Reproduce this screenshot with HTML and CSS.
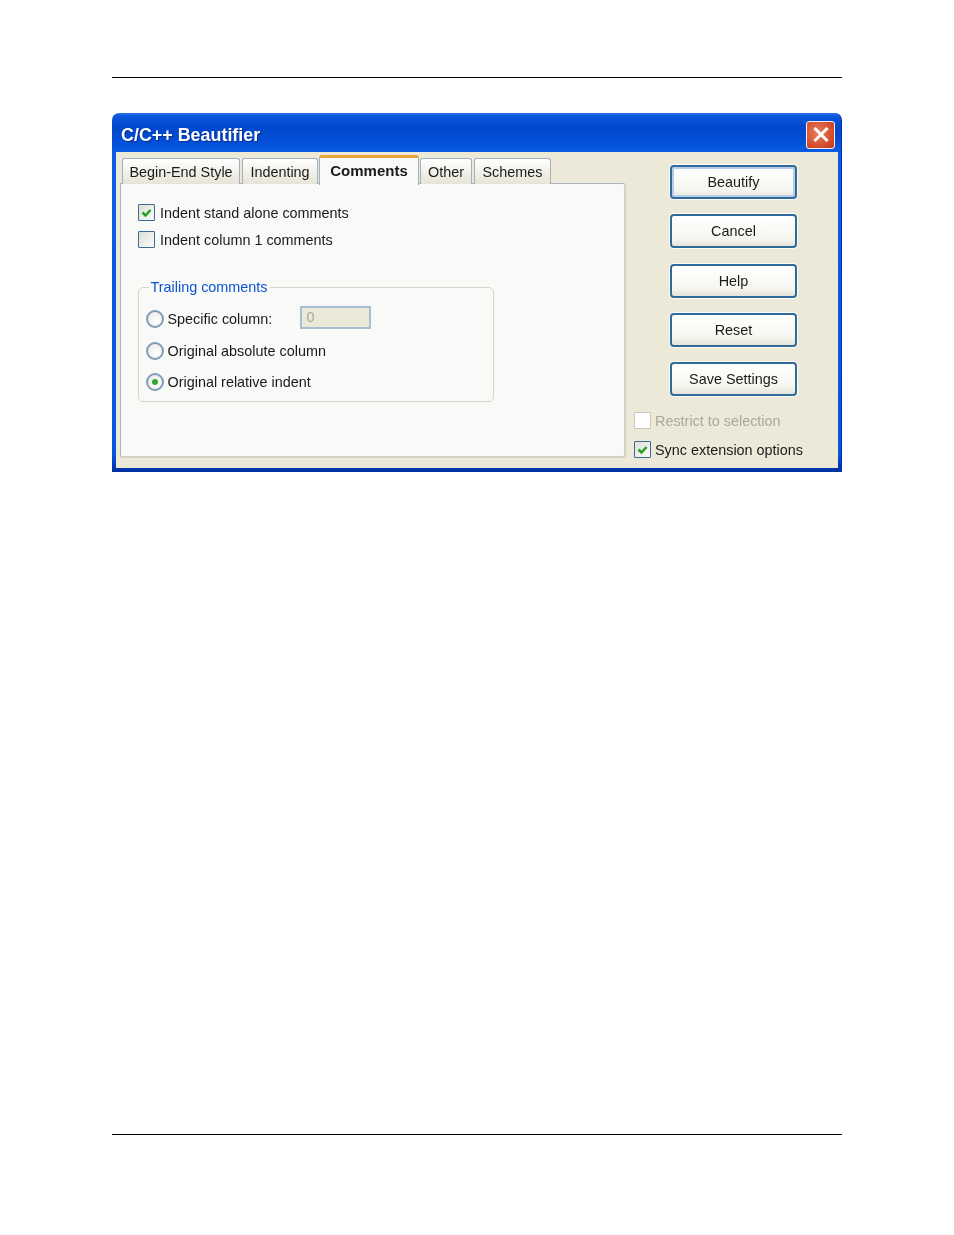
FILE: index.html
```html
<!DOCTYPE html>
<html lang="en">
<head>
<meta charset="utf-8">
<title>C/C++ Beautifier</title>
<link rel="stylesheet" href="styles.css">
</head>
<body>
<div class="page">
  <hr class="rule">
  <div class="window">
    <div class="titlebar">
      <span class="title">C/C++ Beautifier</span>
      <span class="close"><svg viewBox="0 0 28 28" width="28" height="28"><path d="M8.5 8 L19.5 19 M19.5 8 L8.5 19" stroke="#fff" stroke-width="3" stroke-linecap="square"/></svg></span>
    </div>
    <div class="client">
      <div class="left">
        <div class="tabs">
          <div class="tab t1">Begin-End Style</div>
          <div class="tab t2">Indenting</div>
          <div class="tab active">Comments</div>
          <div class="tab t4">Other</div>
          <div class="tab t5">Schemes</div>
        </div>
        <div class="panel">
          <div class="check-row first">
            <span class="box"><svg viewBox="0 0 17 17" width="17" height="17"><path d="M4.5 8.5 L7.5 11.5 L12.5 6" fill="none" stroke="#21a121" stroke-width="2.5"/></svg></span>
            <span>Indent stand alone comments</span>
          </div>
          <div class="check-row second">
            <span class="box"></span>
            <span>Indent column 1 comments</span>
          </div>
          <fieldset class="group">
            <legend>Trailing comments</legend>
            <div class="radio-row r1"><span class="radio"></span><span class="rlabel">Specific column:</span><span class="input">0</span></div>
            <div class="radio-row r2"><span class="radio"></span><span>Original absolute column</span></div>
            <div class="radio-row r3"><span class="radio on"></span><span>Original relative indent</span></div>
          </fieldset>
        </div>
      </div>
      <div class="right">
        <div class="btn default">Beautify</div>
        <div class="btn">Cancel</div>
        <div class="btn">Help</div>
        <div class="btn">Reset</div>
        <div class="btn">Save Settings</div>
        <div class="check-row disabled"><span class="box"></span><span>Restrict to selection</span></div>
        <div class="check-row sync"><span class="box"><svg viewBox="0 0 17 17" width="17" height="17"><path d="M4.5 8.5 L7.5 11.5 L12.5 6" fill="none" stroke="#21a121" stroke-width="2.5"/></svg></span><span>Sync extension options</span></div>
      </div>
    </div>
  </div>
  <hr class="rule bottom">
</div>
</body>
</html>
```
FILE: styles.css
```css
* { box-sizing: border-box; }
html, body { margin: 0; padding: 0; background: #fff; }
body { font-family: "Liberation Sans", Arial, sans-serif; font-size: 14.4px; color: #1a1a1a; }
.page { width: 954px; height: 1235px; padding: 77px 112px 0; }
.rule { margin: 0; border: 0; height: 1px; background: #000; }
.rule.bottom { margin-top: 662px; }
.window { margin-top: 35px; width: 730px; height: 359px; border-radius: 7px 7px 0 0; overflow: hidden; background: linear-gradient(#2a78ee, #0a58dc 3px, #0048cc 14px, #0450d8 30px, #0a5ce4 39px, #0a55e0 340px, #0038b8 354px, #00309c); border-right: 1px solid #0030a0; display: flex; flex-direction: column; padding: 0 3px 4px 4px; filter: blur(0.35px); }
.titlebar { height: 39px; flex: none; padding: 5px 3px 0 5px; display: flex; justify-content: space-between; align-items: center; }
.title { color: #fff; font-weight: 700; font-size: 17.9px; text-shadow: 1px 1px 1px #0a2a8a; }
.close { width: 29px; height: 28px; margin-top: -1px; border-radius: 3px; border: 1px solid #f2f2f2; background: radial-gradient(circle at 40% 40%, #e8805c, #d2482a 70%, #c03c20); display: flex; align-items: center; justify-content: center; }
.close svg { display: block; margin: -1px; flex: none; }
.client { flex: 1; background: #ece9d8; display: flex; min-height: 0; }
.left { width: 506px; margin-left: 4px; flex: none; }
.tabs { display: flex; align-items: flex-end; height: 32px; padding-left: 2px; position: relative; z-index: 1; }
.tab { height: 26px; border: 1px solid #9fb0bf; border-bottom: 0; border-radius: 3px 3px 0 0; background: linear-gradient(#fff, #f0efe6 60%, #e6e3d6); display: flex; align-items: center; justify-content: center; margin-right: 2px; padding-top: 1px; }
.t1 { width: 118px; }
.t2 { width: 76px; margin-right: 1px; }
.t4 { width: 52px; }
.t5 { width: 77px; }
.tab.active { width: 100px; height: 30px; margin-right: 1px; font-size: 15px; font-weight: 700; background: #f9f9f7; border-top: 3px solid #f5a623; padding-bottom: 4px; margin-bottom: -1px; border-color: #e8a33a #9fb0bf #9fb0bf; }
.panel { height: 275px; margin-top: -1px; background: #f9f9f7; border: 1px solid #a9b4bb; border-right: 2px solid #d2d1c5; border-bottom: 2px solid #d2d1c5; border-radius: 0 3px 3px 3px; padding: 20px 0 0 17px; }
.check-row { display: flex; align-items: center; gap: 5px; height: 17px; }
.check-row.second { margin-top: 10px; }
.box { width: 17px; height: 17px; flex: none; border: 1px solid #3d6a94; border-radius: 1px; background: linear-gradient(135deg, #dfdfd8, #fbfbf8); }
.box svg { display: block; margin: -1px; }
.group { margin: 30px 0 0; padding: 0 0 0 6.5px; width: 356px; height: 124px; border: 1.5px solid #d6d4c8; border-radius: 5px; }
.group legend { padding: 0 2px; margin-left: 3px; color: #0a55d4; line-height: 18px; }
.radio-row { display: flex; align-items: center; gap: 4px; height: 20px; }
.r1 { margin-top: 13px; }
.r2 { margin-top: 12px; }
.r3 { margin-top: 11px; }
.rlabel { width: 128px; }
.radio { width: 18px; height: 18px; flex: none; border-radius: 50%; border: 2px solid #7f9cb9; background: radial-gradient(circle at 60% 60%, #fff, #e6e6de); display: flex; align-items: center; justify-content: center; }
.radio.on::after { content: ""; width: 6px; height: 6px; border-radius: 50%; background: #2ea82e; }
.input { width: 71px; height: 23px; margin-top: -4px; background: #ece9d8; border: 2px solid #a7bdd3; color: #aca899; padding-left: 5px; line-height: 19px; }
.right { flex: 1; padding-left: 44px; padding-top: 13px; display: flex; flex-direction: column; position: relative; }
.btn { width: 127px; height: 34px; flex: none; margin-bottom: 15.25px; border: 2px solid #2f6a9a; border-radius: 4px; background: linear-gradient(#fff, #f6f6f0 75%, #e6e4da); box-shadow: 0 0 0 1px #fbfbf6; display: flex; align-items: center; justify-content: center; }
.btn.default { box-shadow: 0 0 0 1px #fbfbf6, inset 0 0 0 2px #b5cdea; }
.right .check-row { margin-left: -36px; gap: 4px; }
.check-row.disabled { color: #aca899; margin-top: 1px; }
.check-row.disabled .box { border-color: #c9c7ba; background: #fff; }
.check-row.sync { margin-top: 12px; }
```
